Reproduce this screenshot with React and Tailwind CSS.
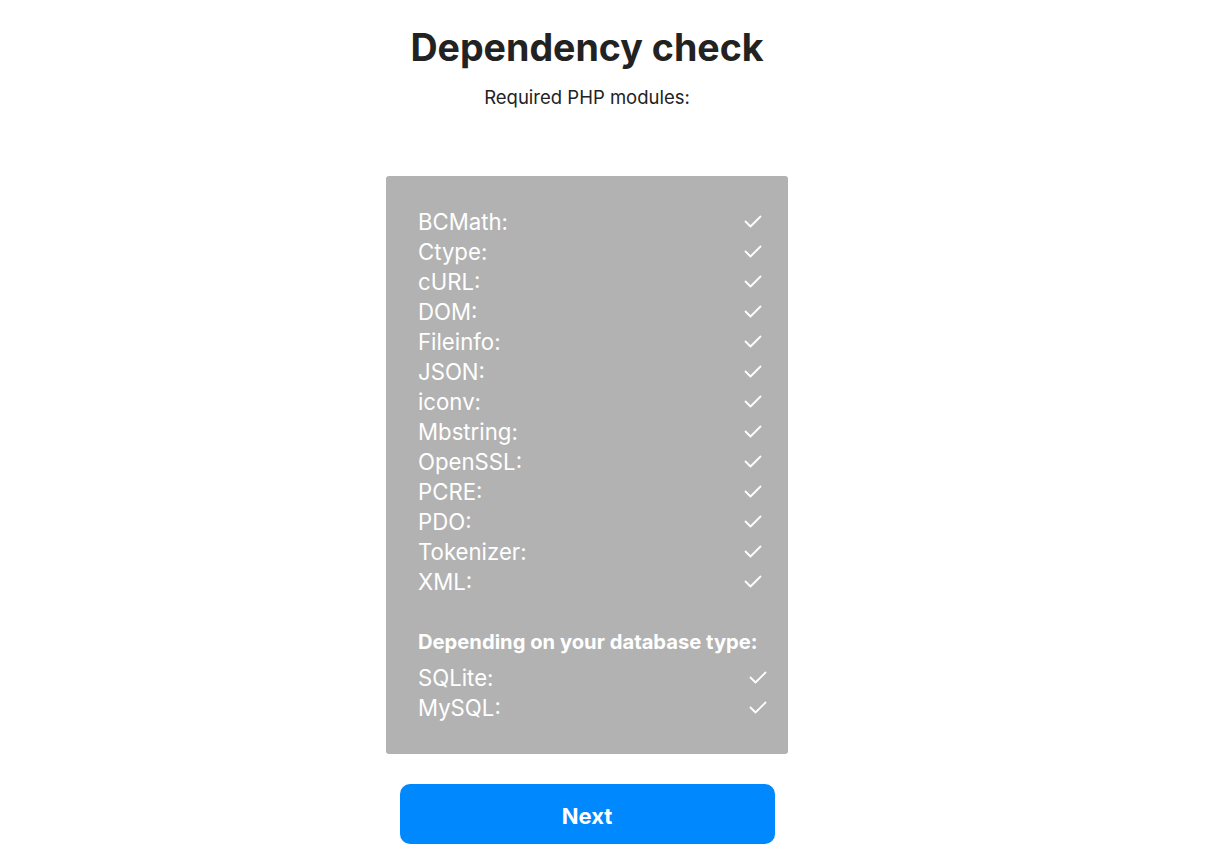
import React from "react";

const modules = [
  "BCMath",
  "Ctype",
  "cURL",
  "DOM",
  "Fileinfo",
  "JSON",
  "iconv",
  "Mbstring",
  "OpenSSL",
  "PCRE",
  "PDO",
  "Tokenizer",
  "XML",
];

const databases = ["SQLite", "MySQL"];

function Check() {
  return (
    <svg width="18" height="13" viewBox="0 0 18 13" fill="none">
      <polyline
        points="1.5,6.5 6.5,11.5 16.5,1.5"
        stroke="white"
        strokeWidth="1.8"
        strokeLinecap="round"
        strokeLinejoin="round"
      />
    </svg>
  );
}

function Row({ name, pad }) {
  return (
    <div className={`flex items-center justify-between h-[30px] leading-[30px] ${pad}`}>
      <span className="pt-[2px]">{name}:</span>
      <Check />
    </div>
  );
}

export default function App() {
  return (
    <div
      className="min-h-screen bg-white"
      style={{ fontFamily: "Inter, 'Noto Sans', sans-serif" }}
    >
      <div className="w-[1174px] flex flex-col items-center">
        <h1 className="mt-[24px] text-[37.6px] leading-[48px] font-bold text-[#222]">
          Dependency check
        </h1>
        <p className="mt-[11px] text-[18.5px] leading-[28px] text-[#222]">
          Required PHP modules:
        </p>

        {/* Modules panel */}
        <div className="mt-[65px] w-[402px] bg-[#b2b2b2] rounded-[3px] pt-[30px] pb-[32px] pl-[32px] text-white text-[22.2px]">
          {modules.map((m) => (
            <Row key={m} name={m} pad="pr-[26px]" />
          ))}
          <h3 className="mt-[31px] mb-[5px] text-[20.2px] leading-[30px] font-bold">
            Depending on your database type:
          </h3>
          {databases.map((d) => (
            <Row key={d} name={d} pad="pr-[21px]" />
          ))}
        </div>

        <button className="mt-[30px] w-[375px] h-[60px] pt-[4px] rounded-[10px] bg-[#0088ff] text-white text-[22px] font-bold">
          Next
        </button>
      </div>
    </div>
  );
}
